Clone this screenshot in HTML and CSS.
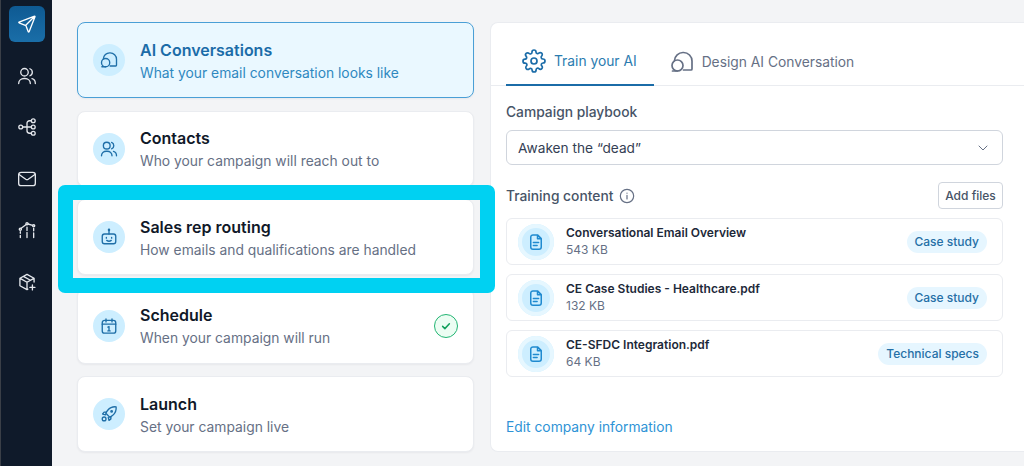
FILE: index.html
```html
<!DOCTYPE html>
<html lang="en">
<head>
<meta charset="utf-8">
<title>Campaign setup</title>
<link rel="stylesheet" href="styles.css">
</head>
<body>
<div class="app">
  <nav class="rail">
    <a class="rail-btn active"><svg viewBox="0 0 24 24" class="rail-ico"><path d="M10.500 13.500L21 3M10.630 13.830l2.630 6.760c.23.600.35.890.51.980a.5.5 0 00.46 0c.17-.09.29-.38.52-.98L21.340 3.900c.21-.54.32-.8.26-.98a.5.5 0 00-.32-.32c-.17-.06-.44.05-.98.26L3.210 9.450c-.59.23-.89.35-.98.510a.5.5 0 000 .46c.09.17.39.29.98.52l6.760 2.630z"/></svg></a>
    <a class="rail-btn"><svg viewBox="0 0 24 24" class="rail-ico"><path d="M2 21c0-3.400 2.800-6 6.500-6h1c3.700 0 6.500 2.600 6.500 6M22 21c0-3-1.500-5.200-4-5.800M15.500 3.300a4.500 4.500 0 010 8.400"/><circle cx="9" cy="7.500" r="4.500"/></svg></a>
    <a class="rail-btn"><svg viewBox="0 0 24 24" class="rail-ico"><circle cx="4.500" cy="12" r="2.300"/><circle cx="19.500" cy="4.500" r="2.300"/><circle cx="19.500" cy="12" r="2.300"/><circle cx="19.500" cy="19.500" r="2.300"/><path d="M6.800 12h10.400M17.200 4.500H15a3 3 0 00-3 3v9a3 3 0 003 3h2.200"/></svg></a>
    <a class="rail-btn"><svg viewBox="0 0 24 24" class="rail-ico"><rect x="2" y="4" width="20" height="16" rx="3"/><path d="M2.500 6.500l8 5.800c1.100.7 1.900.7 3 0l8-5.800"/></svg></a>
    <a class="rail-btn"><svg viewBox="0 0 24 24" class="rail-ico"><circle cx="12" cy="4.500" r="1.300"/><circle cx="20" cy="7" r="1.300"/><circle cx="4" cy="11" r="1.300"/><path d="M5 10l6-4.700M13.300 4.800l5.400 1.600M4 14v2M4 18.500V21M12 8.500v4M12 15v6M20 10v3M20 15.500V21"/></svg></a>
    <a class="rail-btn"><svg viewBox="0 0 24 24" class="rail-ico"><path d="M20.500 12V7.500L12 2.800 3.500 7.500v9l8.500 4.700 1-.6M3.800 7.700L12 12.300l8.300-4.600M12 12.300v8.700M7.700 5.200l8.400 4.700M18.500 15.500v6M15.500 18.500h6"/></svg></a>
  </nav>

  <main class="content">
    <section class="steps">
      <article class="step step-active">
        <span class="step-ico"><svg viewBox="0 0 24 24"><path d="M4.500 10.500a8.500 8.500 0 018.500-8h.5a8.500 8.500 0 018.500 8.500v8c0 .6-.4 1-1 1h-7.500"/><circle cx="7.500" cy="15.500" r="5.500"/><path d="M2.500 21h5"/></svg></span>
        <div class="step-text"><h2>AI Conversations</h2><p>What your email conversation looks like</p></div>
      </article>
      <article class="step">
        <span class="step-ico"><svg viewBox="0 0 24 24"><path d="M2 21c0-3.400 2.800-6 6.500-6h1c3.700 0 6.500 2.600 6.500 6M22 21c0-3-1.500-5.200-4-5.800M15.500 3.300a4.500 4.500 0 010 8.400"/><circle cx="9" cy="7.500" r="4.500"/></svg></span>
        <div class="step-text"><h2>Contacts</h2><p>Who your campaign will reach out to</p></div>
      </article>
      <div class="step-wrap">
        <article class="step">
          <span class="step-ico"><svg viewBox="0 0 24 24"><rect x="3" y="8" width="18" height="13" rx="3"/><path d="M12 8V3M8.500 12.500v1M15.500 12.500v1M9 16.500c1.700 1.300 4.300 1.300 6 0"/><circle cx="12" cy="2.500" r=".8"/></svg></span>
          <div class="step-text"><h2>Sales rep routing</h2><p>How emails and qualifications are handled</p></div>
        </article>
        <div class="highlight"></div>
      </div>
      <article class="step">
        <span class="step-ico"><svg viewBox="0 0 24 24"><rect x="3" y="4.500" width="18" height="17" rx="3"/><path d="M3 9.500h18M8 2.500v4M16 2.500v4M10.500 13.500l1.500-.8v5.800M10.500 18.500h3"/></svg></span>
        <div class="step-text"><h2>Schedule</h2><p>When your campaign will run</p></div>
        <span class="done"><svg viewBox="0 0 24 24"><path d="M7.500 12.500l3 3 6-6.500"/></svg></span>
      </article>
      <article class="step">
        <span class="step-ico"><svg viewBox="0 0 24 24"><path d="M21.500 2.500c-4.200-.5-8.200 1-11.200 4.500L7.500 10.800l5.700 5.700 3.800-2.800c3.500-3 5-7 4.500-11.200z"/><path d="M8.500 9.500H5.500L3.500 12l4 1M14.500 15.500v3L12 20.500l-1-4"/><circle cx="5.500" cy="18.500" r="2.500"/><circle cx="15.500" cy="8.500" r="1"/></svg></span>
        <div class="step-text"><h2>Launch</h2><p>Set your campaign live</p></div>
      </article>
    </section>

    <section class="panel">
      <div class="tabs">
        <a class="tab tab-on"><svg viewBox="0 0 24 24" class="tab-ico"><circle cx="12" cy="12" r="3"/><path d="M19.400 15a1.650 1.650 0 00.33 1.820l.06.06a2 2 0 11-2.830 2.830l-.06-.06a1.650 1.650 0 00-2.800 1.170V21a2 2 0 11-4 0v-.09a1.650 1.650 0 00-2.800-1.140l-.06.06a2 2 0 11-2.830-2.830l.06-.06a1.650 1.650 0 00-1.170-2.800H3a2 2 0 110-4h.09a1.650 1.650 0 001.140-2.800l-.06-.06a2 2 0 112.830-2.830l.06.06a1.650 1.650 0 001.820.33h.12A1.650 1.650 0 0010 3.090V3a2 2 0 114 0v.09a1.650 1.650 0 002.800 1.140l.06-.06a2 2 0 112.830 2.830l-.06.06a1.650 1.650 0 00-.33 1.820v.12a1.650 1.650 0 001.510 1H21a2 2 0 110 4h-.09a1.650 1.650 0 00-1.510 1z"/></svg>Train your AI</a>
        <a class="tab"><svg viewBox="0 0 24 24" class="tab-ico"><path d="M4.500 10.500a8.500 8.500 0 018.500-8h.5a8.500 8.500 0 018.500 8.500v8c0 .6-.4 1-1 1h-7.500"/><circle cx="7.500" cy="15.500" r="5.500"/><path d="M2.500 21h5"/></svg>Design AI Conversation</a>
      </div>
      <div class="panel-body">
        <label class="field-label">Campaign playbook</label>
        <div class="select"><span>Awaken the “dead”</span><svg viewBox="0 0 24 24" class="chev"><path d="M6 9l6 6 6-6"/></svg></div>
        <div class="train-head">
          <span class="field-label">Training content</span>
          <svg viewBox="0 0 24 24" class="info"><circle cx="12" cy="12" r="10"/><path d="M12 11v5.500M12 7.500v.2"/></svg>
          <button class="add">Add files</button>
        </div>
        <ul class="files">
          <li class="file"><span class="file-ico"><svg viewBox="0 0 24 24"><path d="M14 2.500H8a3 3 0 00-3 3v13a3 3 0 003 3h8a3 3 0 003-3V7.500zM14 2.500v5h5M8.500 12.500h7M8.500 16.500h5"/></svg></span><div class="file-text"><b>Conversational Email Overview</b><small>543 KB</small></div><span class="tag">Case study</span></li>
          <li class="file"><span class="file-ico"><svg viewBox="0 0 24 24"><path d="M14 2.500H8a3 3 0 00-3 3v13a3 3 0 003 3h8a3 3 0 003-3V7.500zM14 2.500v5h5M8.500 12.500h7M8.500 16.500h5"/></svg></span><div class="file-text"><b>CE Case Studies - Healthcare.pdf</b><small>132 KB</small></div><span class="tag">Case study</span></li>
          <li class="file"><span class="file-ico"><svg viewBox="0 0 24 24"><path d="M14 2.500H8a3 3 0 00-3 3v13a3 3 0 003 3h8a3 3 0 003-3V7.500zM14 2.500v5h5M8.500 12.500h7M8.500 16.500h5"/></svg></span><div class="file-text"><b>CE-SFDC Integration.pdf</b><small>64 KB</small></div><span class="tag">Technical specs</span></li>
        </ul>
        <a class="edit">Edit company information</a>
      </div>
    </section>
  </main>
</div>
</body>
</html>
```

FILE: styles.css
```css
* { box-sizing: border-box; }
html, body { margin: 0; height: 100%; overflow: hidden; }
body { font-family: Inter, "Liberation Sans", sans-serif; background: #f3f4f6; color: #101828; }
svg { fill: none; stroke: currentColor; stroke-linecap: round; stroke-linejoin: round; display: block; }
h2, p, ul { margin: 0; padding: 0; }

.app { display: flex; height: 466px; }

.rail { width: 52px; flex: none; background: #0f1a2a; border-left: 1px solid #3a3f47; display: flex; flex-direction: column; align-items: center; padding-top: 6px; gap: 15.600px; }
.rail-btn { width: 36px; height: 36px; border-radius: 6px; display: flex; align-items: center; justify-content: center; color: #e4e7ec; }
.rail-btn.active { background: linear-gradient(180deg, #0e5a93, #1a6ea8); color: #fff; }
.rail-ico { width: 20px; height: 20px; stroke-width: 1.600; }

.content { flex: 1; display: flex; gap: 16px; padding: 22px 0 14px 25px; min-width: 0; }

.steps { width: 397px; flex: none; display: flex; flex-direction: column; gap: 12.500px; }
.step-wrap { position: relative; }
.step { height: 76px; background: #fff; border: 1px solid #eaecf0; border-radius: 8px; display: flex; align-items: center; padding: 0 15px; box-shadow: 0 1px 2px rgba(16, 24, 40, .05); }
.step-active { background: #eaf8ff; border-color: #4a9fd6; }
.step-ico { width: 32px; height: 32px; border-radius: 50%; background: #cdeeff; color: #1f6fa8; display: flex; align-items: center; justify-content: center; flex: none; margin-right: 15px; }
.step-ico svg { width: 18px; height: 18px; stroke-width: 1.800; }
.step-text { flex: 1; }
.step h2 { font-size: 16px; line-height: 24px; font-weight: 600; color: #101828; }
.step p { font-size: 13.850px; line-height: 20px; margin-top: 1px; color: #667085; }
.step-active h2 { color: #1b6ca8; }
.step-active p { color: #2f88bf; }
.done { width: 24px; height: 24px; border-radius: 50%; border: 1.500px solid #22b573; background: #ecfdf3; color: #12a05c; flex: none; display: flex; align-items: center; justify-content: center; }
.done svg { width: 18px; height: 18px; stroke-width: 2; }
.highlight { position: absolute; left: -19px; right: -21px; top: -14px; bottom: -18px; border: 15px solid #00d1f2; border-radius: 7px; }

.panel { flex: 1; min-width: 0; height: 430px; background: #fff; border: 1px solid #eaecf0; border-right: 0; border-radius: 8px 0 0 8px; }
.tabs { display: flex; height: 63px; border-bottom: 1px solid #eaecf0; padding-left: 15px; }
.tab { display: flex; align-items: center; gap: 8px; height: 63px; padding: 15px 16px 0; font-size: 13.800px; color: #667085; }
.tab-on { color: #2b7cb0; border-bottom: 2px solid #1b6ca8; padding-right: 17px; }
.tab-on .tab-ico { color: #1b6ca8; }
.tab-ico { width: 24px; height: 24px; stroke-width: 1.700; flex: none; }
.panel-body { padding: 16px 21px 0 15px; }
.field-label { display: block; font-size: 13.800px; line-height: 20px; font-weight: 500; color: #475467; }
.select { height: 35px; margin-top: 8px; border: 1px solid #d0d5dd; border-radius: 6px; display: flex; align-items: center; justify-content: space-between; padding: 0 11px; font-size: 13.700px; color: #344054; }
.chev { width: 16px; height: 16px; stroke-width: 1.500; color: #667085; }
.train-head { display: flex; align-items: center; margin-top: 17px; gap: 6px; }
.info { width: 16px; height: 16px; color: #667085; stroke-width: 1.800; }
.add { margin-left: auto; height: 27px; width: 65px; padding: 0; background: #fff; border: 1px solid #d0d5dd; border-radius: 4px; font: 500 12px Inter, sans-serif; color: #475467; }
.files { list-style: none; margin-top: 9px; display: flex; flex-direction: column; gap: 9px; }
.file { height: 47px; border: 1px solid #eaecf0; border-radius: 6px; display: flex; align-items: center; padding: 0 15px 0 11px; }
.file-ico { width: 36px; height: 36px; border-radius: 50%; background: #cdeeff; box-shadow: inset 0 0 0 4px #e6f7ff; color: #1f8ad0; display: flex; align-items: center; justify-content: center; flex: none; margin-right: 12px; }
.file-ico svg { width: 18px; height: 18px; stroke-width: 2; }
.file-text { flex: 1; display: flex; flex-direction: column; }
.file-text b { font-size: 12px; line-height: 17px; font-weight: 600; color: #1d2939; }
.file-text small { font-size: 12px; line-height: 18px; color: #667085; }
.tag { height: 22px; padding: 0 8px; border-radius: 11px; background: #e6f6ff; color: #256fa6; font-size: 12px; font-weight: 500; line-height: 22px; }
.edit { display: block; margin-top: 40px; font-size: 13.800px; line-height: 20px; color: #2e93d6; }
```
